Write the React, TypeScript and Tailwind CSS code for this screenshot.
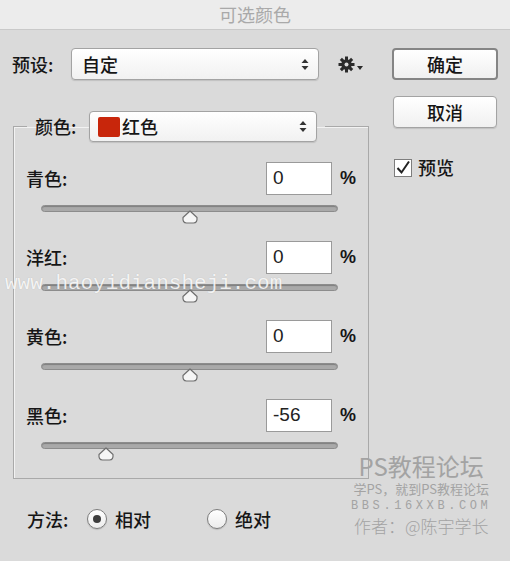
import React from "react";

const rows = [
  { label: "青色:", value: 0 },
  { label: "洋红:", value: 0 },
  { label: "黄色:", value: 0 },
  { label: "黑色:", value: -56 },
];

function UpDown() {
  return (
    <svg width="8" height="13" viewBox="0 0 8 13" className="shrink-0">
      <path d="M4 1 L7.5 5 H0.5 Z" fill="#333" />
      <path d="M4 12 L7.5 8 H0.5 Z" fill="#333" />
    </svg>
  );
}

function Gear() {
  const teeth = [0, 45, 90, 135, 180, 225, 270, 315];
  return (
    <div className="flex items-end gap-[2px]">
      <svg width="17" height="17" viewBox="0 0 17 17">
        {teeth.map((a) => (
          <rect
            key={a}
            x="7"
            y="0.5"
            width="3"
            height="4"
            fill="#2a2a2a"
            transform={`rotate(${a} 8.5 8.5)`}
          />
        ))}
        <circle cx="8.5" cy="8.5" r="5.2" fill="#2a2a2a" />
        <circle cx="8.5" cy="8.5" r="2" fill="#dadada" />
      </svg>
      <svg width="6" height="4" viewBox="0 0 6 4" className="mb-[3px]">
        <path d="M0 0 H6 L3 4 Z" fill="#2a2a2a" />
      </svg>
    </div>
  );
}

function Slider({ value }: { value: number }) {
  const pct = (value + 100) / 2;
  return (
    <div className="relative ml-[27px] mt-[10px] h-[20px] w-[297px]">
      <div className="h-[7px] w-full rounded-full border border-[#8c8c8c] bg-[#a9a9a9] shadow-[inset_0_1px_1px_rgba(0,0,0,0.25)]" />
      <svg
        width="17"
        height="14"
        viewBox="0 0 17 14"
        className="absolute top-[5px] -translate-x-1/2"
        style={{ left: `${pct}%` }}
      >
        <path
          d="M8.5 1 L15.5 7.5 Q16 13 12 13 H5 Q1 13 1.5 7.5 Z"
          fill="#f6f6f6"
          stroke="#6f6f6f"
          strokeWidth="1.2"
          strokeLinejoin="round"
        />
      </svg>
    </div>
  );
}

function Radio({ on }: { on: boolean }) {
  return (
    <div className="flex h-[20px] w-[20px] items-center justify-center rounded-full border border-[#7d7d7d] bg-gradient-to-b from-white to-[#ececec] shadow-[0_1px_1px_rgba(0,0,0,0.15)]">
      {on && <div className="h-[8px] w-[8px] rounded-full bg-[#3d3d3d]" />}
    </div>
  );
}

export default function App() {
  return (
    <div className="relative h-[561px] w-[510px] overflow-hidden bg-[#dadada] font-['Noto_Sans_CJK_SC',sans-serif] font-medium text-[#161616]">
      <div className="flex h-[30px] items-center justify-center border-b border-[#c9c9c9] bg-[#ececec] text-[18px] font-normal text-[#a9a9a9]">
        可选颜色
      </div>

      <div className="flex pt-[18px]">
        <div className="w-[370px] pl-[12px]">
          <div className="flex h-[32px] items-center">
            <span className="w-[59px] text-[18px]">预设:</span>
            <div className="flex h-[32px] w-[248px] items-center justify-between rounded-[4px] border border-[#a3a3a3] bg-gradient-to-b from-white to-[#f1f1f1] pl-[10px] pr-[9px] shadow-[0_1px_1px_rgba(0,0,0,0.12)]">
              <span className="text-[18px]">自定</span>
              <UpDown />
            </div>
            <div className="ml-[19px]">
              <Gear />
            </div>
          </div>

          <fieldset className="ml-[1px] mt-[31px] w-[356px] border border-[#a9a9a9] p-0 pb-[16px] shadow-[inset_1px_1px_0_#f2f2f2]">
            <legend className="ml-[13px] px-[8px]">
              <div className="flex h-[31px] items-center">
                <span className="w-[54px] text-[18px]">颜色:</span>
                <div className="flex h-[31px] w-[228px] items-center justify-between rounded-[4px] border border-[#a3a3a3] bg-gradient-to-b from-white to-[#f1f1f1] pl-[8px] pr-[9px] shadow-[0_1px_1px_rgba(0,0,0,0.12)]">
                  <div className="flex items-center gap-[2px]">
                    <div className="h-[20px] w-[22px] rounded-[2px] bg-[#c8260b]" />
                    <span className="text-[18px]">红色</span>
                  </div>
                  <UpDown />
                </div>
              </div>
            </legend>

            <div className="mt-[20px] flex flex-col gap-[16px]">
              {rows.map((r) => (
                <div key={r.label}>
                  <div className="flex h-[33px] items-center pl-[12px]">
                    <span className="w-[240px] text-[18px]">{r.label}</span>
                    <div className="flex h-[33px] w-[66px] items-center border border-[#9a9a9a] bg-white pl-[6px] font-['Liberation_Sans',sans-serif] text-[19px] font-normal text-[#222]">
                      {r.value}
                    </div>
                    <span className="ml-[8px] font-['Liberation_Sans',sans-serif] text-[18px] font-bold">
                      %
                    </span>
                  </div>
                  <Slider value={r.value} />
                </div>
              ))}
            </div>
          </fieldset>

          <div className="ml-[15px] mt-[28px] flex h-[24px] items-center">
            <span className="w-[60px] text-[18px]">方法:</span>
            <Radio on />
            <span className="ml-[8px] w-[92px] text-[18px]">相对</span>
            <Radio on={false} />
            <span className="ml-[8px] text-[18px]">绝对</span>
          </div>
        </div>

        <div className="ml-[22px] flex flex-col">
          <button className="h-[32px] w-[106px] rounded-[4px] border-2 border-[#858585] bg-gradient-to-b from-white to-[#f0f0f0] text-[18px]">
            确定
          </button>
          <button className="ml-[1px] mt-[16px] h-[32px] w-[104px] rounded-[4px] border border-[#a3a3a3] bg-gradient-to-b from-white to-[#f0f0f0] text-[18px] shadow-[0_1px_1px_rgba(0,0,0,0.12)]">
            取消
          </button>
          <div className="ml-[2px] mt-[26px] flex items-center">
            <div className="flex h-[18px] w-[18px] items-center justify-center border border-[#7d7d7d] bg-white">
              <svg width="16" height="16" viewBox="0 0 16 16">
                <path
                  d="M2.5 8 L6.5 12.5 L14 1.5"
                  fill="none"
                  stroke="#222"
                  strokeWidth="2"
                />
              </svg>
            </div>
            <span className="ml-[6px] text-[18px]">预览</span>
          </div>
        </div>
      </div>

      <div className="pointer-events-none absolute left-[5px] top-[268px] font-['Liberation_Mono',monospace] text-[21px] font-normal text-white/85 [text-shadow:0_0_1px_rgba(0,0,0,0.2)]">
        www.haoyidiansheji.com
      </div>

      <div className="pointer-events-none absolute left-[351px] top-[453px] flex flex-col items-center font-normal text-[#a3a3a3]">
        <span className="text-[24px] leading-[26px]">PS教程论坛</span>
        <span className="text-[13px] leading-[20px]">学PS，就到PS教程论坛</span>
        <span className="font-['Liberation_Mono',monospace] text-[12px] leading-[14px] tracking-[3.6px]">
          BBS.16XXB.COM
        </span>
        <span className="text-[17px] font-light leading-[26px]">作者：@陈宇学长</span>
      </div>
    </div>
  );
}
